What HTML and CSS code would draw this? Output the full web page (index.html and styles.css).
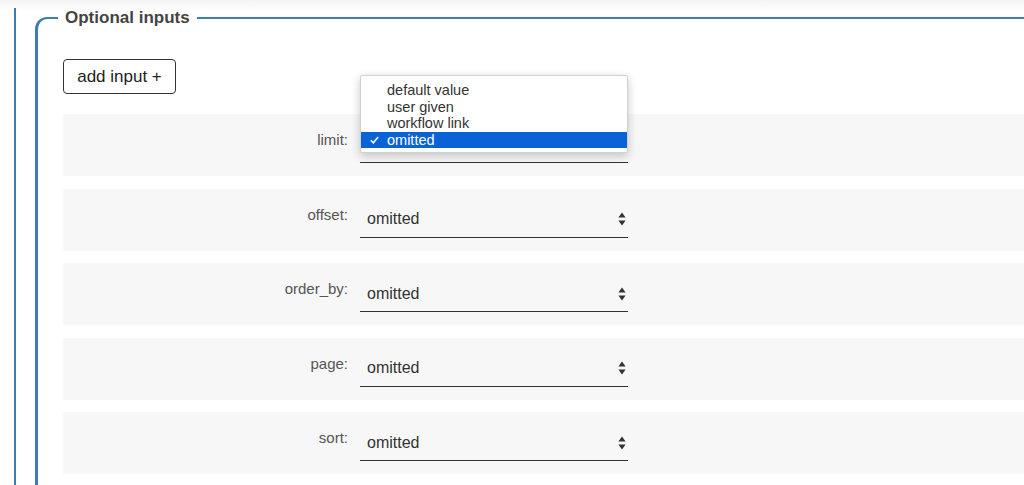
FILE: index.html
```html
<!DOCTYPE html>
<html lang="en">
<head>
<meta charset="utf-8">
<title>Optional inputs</title>
<link rel="stylesheet" href="styles.css">
</head>
<body>
<div class="page">
  <fieldset class="optional">
    <legend class="optional-legend">Optional inputs</legend>
    <button class="add-btn" type="button">add input +</button>
    <div class="rows">
      <div class="row">
        <div class="row-label">limit:</div>
        <div class="fake-select fake-select-open"><span class="fake-value">omitted</span><svg class="arrows" width="8" height="14" viewBox="0 0 8 14"><path d="M4 0.5 L7.6 5.6 L0.4 5.6 Z M0.4 8.4 L7.6 8.4 L4 13.5 Z" fill="#333"/></svg></div>
      </div>
      <div class="row">
        <div class="row-label">offset:</div>
        <div class="fake-select"><span class="fake-value">omitted</span><svg class="arrows" width="8" height="14" viewBox="0 0 8 14"><path d="M4 0.5 L7.6 5.6 L0.4 5.6 Z M0.4 8.4 L7.6 8.4 L4 13.5 Z" fill="#333"/></svg></div>
      </div>
      <div class="row">
        <div class="row-label">order_by:</div>
        <div class="fake-select"><span class="fake-value">omitted</span><svg class="arrows" width="8" height="14" viewBox="0 0 8 14"><path d="M4 0.5 L7.6 5.6 L0.4 5.6 Z M0.4 8.4 L7.6 8.4 L4 13.5 Z" fill="#333"/></svg></div>
      </div>
      <div class="row">
        <div class="row-label">page:</div>
        <div class="fake-select"><span class="fake-value">omitted</span><svg class="arrows" width="8" height="14" viewBox="0 0 8 14"><path d="M4 0.5 L7.6 5.6 L0.4 5.6 Z M0.4 8.4 L7.6 8.4 L4 13.5 Z" fill="#333"/></svg></div>
      </div>
      <div class="row">
        <div class="row-label">sort:</div>
        <div class="fake-select"><span class="fake-value">omitted</span><svg class="arrows" width="8" height="14" viewBox="0 0 8 14"><path d="M4 0.5 L7.6 5.6 L0.4 5.6 Z M0.4 8.4 L7.6 8.4 L4 13.5 Z" fill="#333"/></svg></div>
      </div>
    </div>
  </fieldset>
</div>
<ul class="popup">
  <li class="popup-item"><span class="check"></span><span class="item-text">default value</span></li>
  <li class="popup-item"><span class="check"></span><span class="item-text">user given</span></li>
  <li class="popup-item"><span class="check"></span><span class="item-text">workflow link</span></li>
  <li class="popup-item popup-item-selected"><span class="check"><svg width="9" height="8" viewBox="0 0 9 8"><path d="M0.8 4.2 L3.3 6.8 L8.2 0.9" fill="none" stroke="#fff" stroke-width="1.5"/></svg></span><span class="item-text">omitted</span></li>
</ul>
</body>
</html>
```
FILE: styles.css
```css
html, body {
  margin: 0;
  padding: 0;
  height: 100%;
  overflow: hidden;
}
body {
  font-family: "Liberation Sans", Arial, sans-serif;
  color: #333;
  background: linear-gradient(to bottom, #f4f4f4 0px, #ffffff 12px);
  position: relative;
}
.page {
  margin-left: 14px;
  border-left: 2px solid #3b7db4;
  height: 485px;
  padding-left: 19px;
  box-sizing: border-box;
}
.optional {
  box-sizing: border-box;
  margin: 8px 0 0 0;
  padding: 0 0 0 26px;
  border: 2px solid #3b7db4;
  border-left-width: 3px;
  border-right: none;
  border-bottom: none;
  border-top-left-radius: 12px;
  height: 477px;
  min-width: 0;
}
.optional-legend {
  font-size: 17px;
  font-weight: bold;
  color: #444;
  line-height: 20px;
  padding: 0 7px;
  margin-left: -6px;
}
.add-btn {
  display: block;
  margin-top: 31px;
  margin-left: -1px;
  width: 113px;
  height: 35px;
  padding: 0;
  font-family: "Liberation Sans", Arial, sans-serif;
  font-size: 17px;
  color: #222;
  background: #fff;
  border: 1px solid #333;
  border-radius: 4px;
}
.rows {
  margin-top: 20px;
  margin-left: -1px;
  display: flex;
  flex-direction: column;
  gap: 12.5px;
}
.row {
  display: flex;
  height: 62px;
  background: #f7f7f7;
}
.row-label {
  width: 285px;
  text-align: right;
  font-size: 15px;
  line-height: 17px;
  padding-top: 17px;
  color: #555;
}
.fake-select {
  margin-left: 12px;
  margin-top: 19px;
  width: 268px;
  height: 30px;
  box-sizing: border-box;
  border-bottom: 1px solid #333;
  display: flex;
  align-items: center;
  justify-content: space-between;
  padding: 0 2px 6px 7px;
}
.fake-select-open .fake-value,
.fake-select-open .arrows {
  visibility: hidden;
}
.fake-value {
  font-size: 16px;
  color: #333;
}
.arrows {
  display: block;
}
.popup {
  position: absolute;
  left: 360px;
  top: 75px;
  width: 268px;
  box-sizing: border-box;
  margin: 0;
  padding: 6px 0 4px;
  list-style: none;
  background: #fff;
  border: 1px solid rgba(0, 0, 0, 0.18);
  border-radius: 2px;
  box-shadow: 0 3px 10px rgba(0, 0, 0, 0.22);
}
.popup-item {
  display: flex;
  align-items: center;
  font-size: 14.5px;
  line-height: 16.5px;
  color: #333;
}
.popup-item-selected {
  background: #0a63d6;
  color: #fff;
}
.check {
  width: 26px;
  flex: none;
  box-sizing: border-box;
  padding-left: 9px;
  display: flex;
  align-items: center;
}
.check svg {
  display: block;
}
```
